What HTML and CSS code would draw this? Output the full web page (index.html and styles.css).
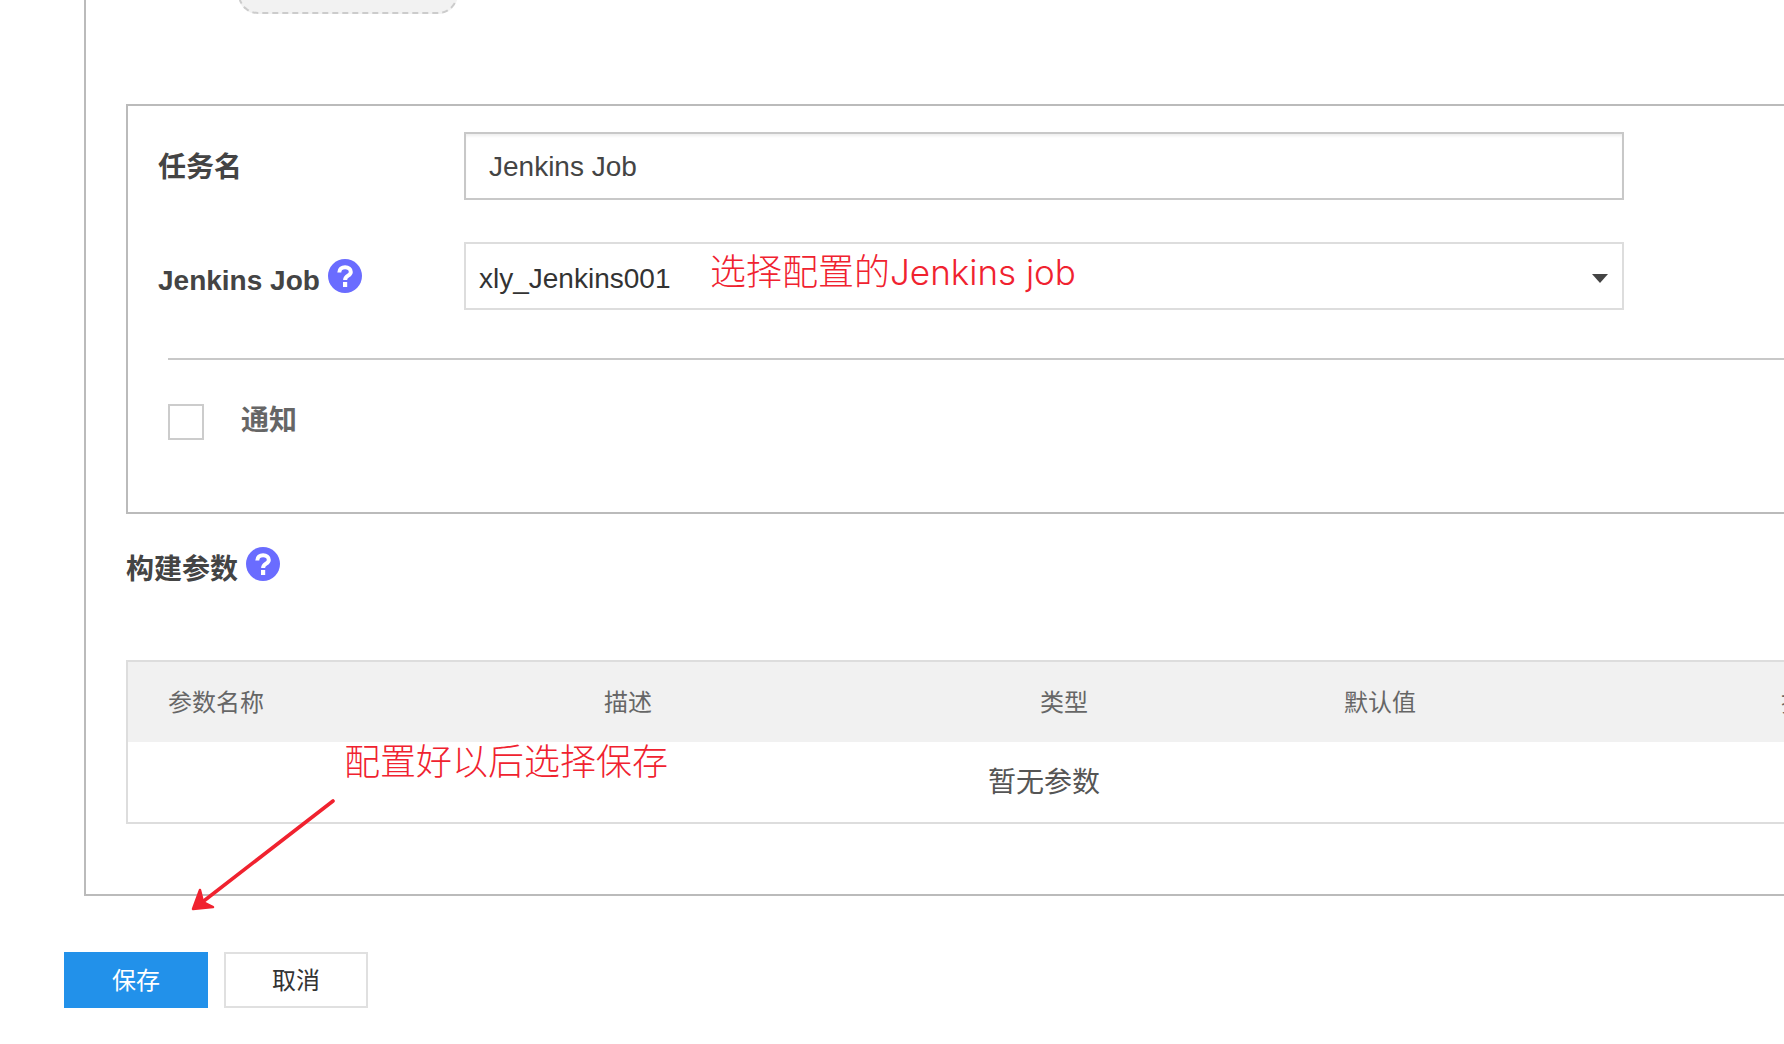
FILE: index.html
```html
<!DOCTYPE html>
<html lang="zh-CN">
<head>
<meta charset="utf-8">
<title>Jenkins Job</title>
<link rel="stylesheet" href="styles.css">
</head>
<body>
<main class="page">
  <section class="panel">
    <div class="upload-pill"></div>
    <div class="job-box">
      <div class="form-row">
        <label class="form-label"><span class="label-cjk">任务名</span></label>
        <input class="text-input" type="text" value="Jenkins Job" readonly>
      </div>
      <div class="form-row form-row-second">
        <label class="form-label"><span class="label-latin">Jenkins Job</span>
          <svg class="help-icon" viewBox="0 0 34 34"><circle cx="17" cy="17" r="17" fill="#6a6cff"/><path d="M11.300 13.600c0-3.500 2.500-5.300 5.800-5.300s5.700 1.900 5.700 4.600c0 4-5.700 3.600-5.700 8.100" stroke="#fff" stroke-width="4" fill="none"/><rect x="15" y="23" width="4.200" height="5" fill="#fff"/></svg>
        </label>
        <div class="select-box">
          <span class="select-value">xly_Jenkins001</span>
          <span class="select-caret"></span>
        </div>
      </div>
      <hr class="divider">
      <div class="notify-row">
        <span class="checkbox"></span>
        <span class="notify-label">通知</span>
      </div>
    </div>
    <h2 class="params-title"><span class="params-text">构建参数</span>
      <svg class="help-icon" viewBox="0 0 34 34"><circle cx="17" cy="17" r="17" fill="#6a6cff"/><path d="M11.300 13.600c0-3.500 2.500-5.300 5.800-5.300s5.700 1.900 5.700 4.600c0 4-5.700 3.600-5.700 8.100" stroke="#fff" stroke-width="4" fill="none"/><rect x="15" y="23" width="4.200" height="5" fill="#fff"/></svg>
    </h2>
    <div class="params-table">
      <div class="table-head">
        <span class="col col-name">参数名称</span>
        <span class="col col-desc">描述</span>
        <span class="col col-type">类型</span>
        <span class="col col-default">默认值</span>
        <span class="col col-action">操作</span>
      </div>
      <div class="table-empty">暂无参数</div>
    </div>
  </section>
  <div class="actions">
    <button class="btn btn-primary" type="button">保存</button>
    <button class="btn btn-default" type="button">取消</button>
  </div>
  <div class="note note-job">选择配置的<span class="note-latin">Jenkins job</span></div>
  <div class="note note-save">配置好以后选择保存</div>
  <svg class="arrow" viewBox="0 0 160 125"><path d="M145 5 L8 111" stroke="#f0222f" stroke-width="3.600" stroke-linecap="round" fill="none"/><path d="M12 94 L5 113 L25 111 L15 106 Z" fill="#f0222f" stroke="#f0222f" stroke-width="2.500" stroke-linejoin="round"/></svg>
</main>
</body>
</html>
```
FILE: styles.css
```css
* { box-sizing: border-box; }
html, body { margin: 0; height: 100%; background: #fff; overflow: hidden; }
body { font-family: "Liberation Sans", "Noto Sans CJK SC", sans-serif; color: #444; }
.page { position: relative; width: 1784px; height: 1044px; overflow: hidden; }

.panel {
  width: 1800px; height: 923px; margin: -27px 0 0 84px; padding-left: 40px;
  border-left: 2px solid #bbb; border-bottom: 2px solid #bbb;
}
.upload-pill {
  width: 220px; height: 41px; margin-left: 112px;
  background: #f2f2f2; border: 2px dashed #ccc; border-radius: 20px;
}
.job-box {
  width: 1836px; height: 410px; margin-top: 90px; padding: 26px 0 0 30px;
  border: 2px solid #bbb;
}
.form-row { display: flex; align-items: center; height: 68px; }
.form-row-second { margin-top: 42px; }
.form-label { width: 306px; flex: none; font-size: 28px; font-weight: 700; color: #444; display: flex; align-items: center; gap: 8px; }
.label-cjk { padding-bottom: 2px; }
.label-latin { padding-top: 10px; }
.help-icon { width: 34px; height: 34px; flex: none; }
.text-input {
  width: 1160px; height: 68px; padding: 2px 23px 0;
  border: 2px solid #c8c8c8; box-shadow: inset 0 3px 3px -1px #eee;
  font: 28px "Liberation Sans", sans-serif; color: #444; outline: none; border-radius: 0;
}
.select-box {
  width: 1160px; height: 68px; padding: 6px 14px 0 13px;
  border: 2px solid #ddd; display: flex; align-items: center; justify-content: space-between;
  font-size: 28px; color: #333;
}
.select-caret { width: 0; height: 0; margin-top: -2px; border-left: 8px solid transparent; border-right: 8px solid transparent; border-top: 9px solid #444; }
.divider { height: 2px; margin: 48px 0 0 10px; border: 0; background: #c8c8c8; }
.notify-row { display: flex; align-items: flex-start; gap: 37px; margin: 44px 0 0 10px; }
.checkbox { width: 36px; height: 36px; border: 2px solid #ccc; }
.notify-label { font-size: 28px; line-height: 34px; font-weight: 700; color: #666; }

.params-title {
  display: flex; align-items: center; gap: 8px; height: 34px; margin: 33px 0 0 0;
  font-size: 28px; font-weight: 700; color: #444; line-height: 34px;
}
.params-text { padding-top: 12px; }
.params-table { width: 1836px; height: 164px; margin-top: 79px; border: 2px solid #ddd; }
.table-head { height: 80px; padding-bottom: 4px; background: #f1f1f1; display: flex; align-items: center; font-size: 24px; color: #666; }
.col { flex: none; white-space: nowrap; }
.col-name { width: 476px; padding-left: 40px; }
.col-desc { width: 436px; }
.col-type { width: 304px; }
.col-default { width: 437px; }
.table-empty { height: 80px; padding-bottom: 4px; display: flex; align-items: center; justify-content: center; font-size: 28px; color: #555; }

.actions { display: flex; gap: 16px; margin: 56px 0 0 64px; }
.btn { height: 56px; font: 24px "Noto Sans CJK SC", sans-serif; border-radius: 0; padding: 0 0 4px; }
.btn-primary { width: 144px; background: #2291ea; border: 0; color: #fff; }
.btn-default { width: 144px; background: #fff; border: 2px solid #e0e0e0; color: #333; }

.note { position: absolute; font-size: 36px; font-weight: 300; line-height: 44px; color: #f0222f; white-space: nowrap; font-family: "Noto Sans CJK SC", sans-serif; }
.note-latin { font-family: Inter, sans-serif; font-weight: 300; font-size: 35px; }
.note-job { left: 710px; top: 247px; }
.note-save { left: 344px; top: 737px; }
.arrow { position: absolute; left: 188px; top: 796px; width: 160px; height: 125px; }
```
